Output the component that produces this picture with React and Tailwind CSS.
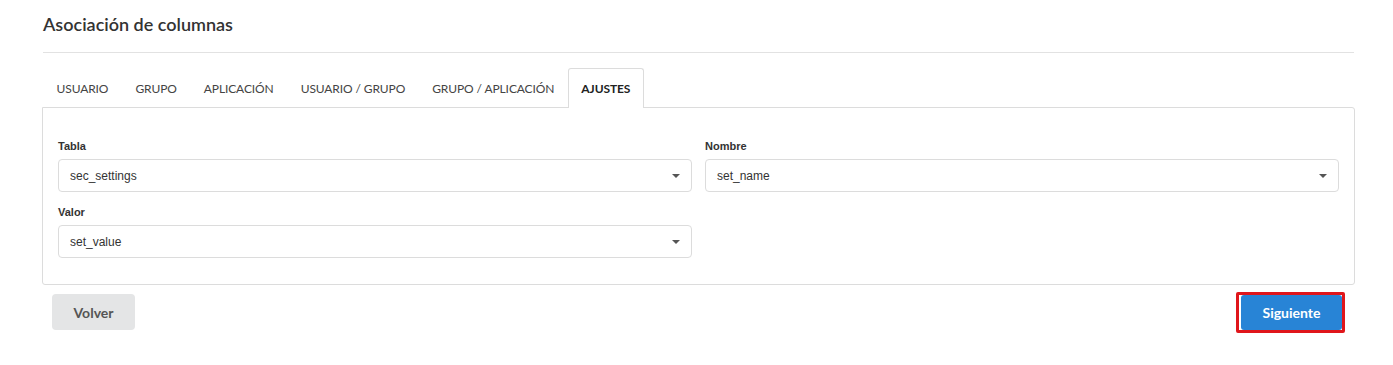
import { useState } from "react";

const tabs = ["USUARIO", "GRUPO", "APLICACIÓN", "USUARIO / GRUPO", "GRUPO / APLICACIÓN", "AJUSTES"];

function SelectBox({ label, value }) {
    return (
        <div>
            <label className="block text-[11px] font-bold text-[#333] mb-[6px] leading-[14px]">{label}</label>
            <div className="flex items-center justify-between h-[33px] border border-[#dcdcdc] rounded-[4px] pl-[11px] pr-[11px] bg-white">
                <span className="text-[12px] text-[#333]">{value}</span>
                <span className="w-0 h-0 border-l-[4px] border-r-[4px] border-t-[4px] border-l-transparent border-r-transparent border-t-[#555]"></span>
            </div>
        </div>
    );
}

export default function App() {
    const [active, setActive] = useState("AJUSTES");

    return (
        <div className="w-[1393px] h-[365px] bg-white pl-[42px] pr-[38px] font-['Liberation_Sans',Arial,sans-serif]">
            <div className="ml-[1px] mr-[1px] pt-[13px] pb-[17px] border-b border-[#e2e2e2]">
                <h2 className="font-['Lato',sans-serif] text-[18px] font-semibold text-[#333] leading-[22px]">Asociación de columnas</h2>
            </div>

            <div className="mt-[15px] flex pl-[1px]">
                {tabs.map((tab) => (
                    <button
                        key={tab}
                        onClick={() => setActive(tab)}
                        className={`h-[40px] px-[12.5px] font-['Lato',sans-serif] text-[12px] tracking-[-0.1px] border border-b-0 rounded-t-[3px] -mb-px relative ${active === tab ? "border-[#dcdcdc] bg-white font-bold text-[#222]" : "border-transparent text-[#444]"}`}
                    >
                        {tab}
                    </button>
                ))}
            </div>

            <div className="border border-[#dcdcdc] rounded-b-[3px] rounded-tr-[3px] px-[15px] pt-[31px] pb-[26px] h-[178px]">
                <div className="grid grid-cols-2 gap-x-[13px] gap-y-[13px]">
                    <SelectBox label="Tabla" value="sec_settings" />
                    <SelectBox label="Nombre" value="set_name" />
                    <SelectBox label="Valor" value="set_value" />
                </div>
            </div>

            <div className="flex justify-between items-start mt-[7px] pl-[10px] pr-[10px]">
                <button className="mt-[2px] w-[83px] h-[36px] rounded-[4px] bg-[#e4e5e6] text-[#555] font-['Lato',sans-serif] font-bold text-[14px]">
                    Volver
                </button>
                <div className="border-[3px] border-[#e0161b] pl-[2px] rounded-[2px]">
                    <button className="block w-[101px] h-[35px] rounded-[3px] bg-[#2884d6] text-white font-['Lato',sans-serif] font-bold text-[14px]">
                        Siguiente
                    </button>
                </div>
            </div>
        </div>
    );
}
